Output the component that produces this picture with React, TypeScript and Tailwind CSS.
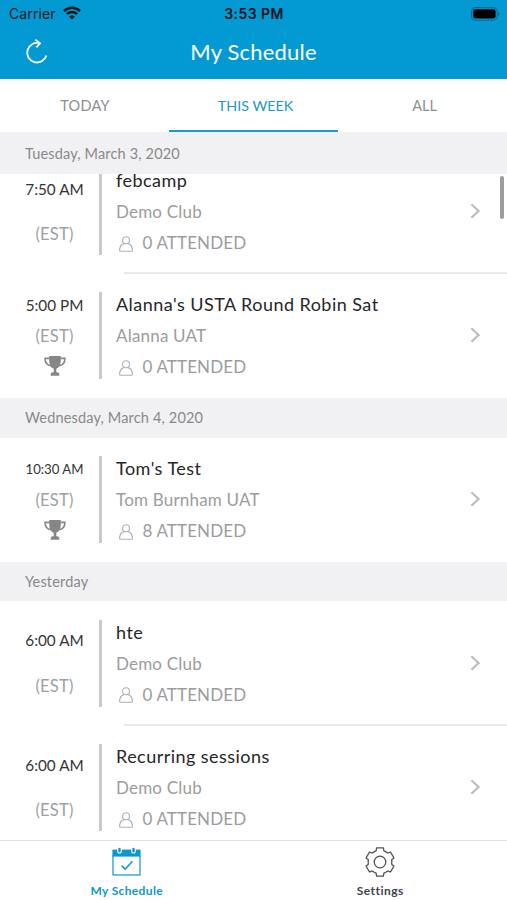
import clsx from "clsx"

type Session = {
  time: string
  title: string
  club: string
  attended: number
  trophy?: boolean
  smallTime?: boolean
}

type Section = {
  label: string
  sessions: Session[]
}

const first: Section = {
  label: "Tuesday, March 3, 2020",
  sessions: [
    { time: "7:50 AM", title: "febcamp", club: "Demo Club", attended: 0 },
    { time: "5:00 PM", title: "Alanna's USTA Round Robin Sat", club: "Alanna UAT", attended: 0, trophy: true },
  ],
}

const rest: Section[] = [
  {
    label: "Wednesday, March 4, 2020",
    sessions: [
      { time: "10:30 AM", title: "Tom's Test", club: "Tom Burnham UAT", attended: 8, trophy: true, smallTime: true },
    ],
  },
  {
    label: "Yesterday",
    sessions: [
      { time: "6:00 AM", title: "hte", club: "Demo Club", attended: 0 },
      { time: "6:00 AM", title: "Recurring sessions", club: "Demo Club", attended: 0 },
    ],
  },
]

function WifiIcon() {
  return (
    <svg width="18" height="14" viewBox="0 0 18 14" fill="none" stroke="#06151c" strokeWidth="2.5">
      <path d="M1 5.1a11.4 11.4 0 0 1 16 0" />
      <path d="M3.9 8.2a7.3 7.3 0 0 1 10.2 0" />
      <path d="M9 13.6 6.2 10.7a4 4 0 0 1 5.6 0Z" fill="#06151c" stroke="none" />
    </svg>
  )
}

function BatteryIcon() {
  return (
    <svg width="30" height="14" viewBox="0 0 30 14">
      <rect x="0.6" y="0.6" width="25.6" height="12.6" rx="4" fill="none" stroke="#05698f" strokeWidth="1.1" />
      <rect x="2.2" y="2.2" width="22.4" height="9.4" rx="2.4" fill="#000" />
      <path d="M27.3 4.8c1.6.7 1.6 3.6 0 4.3Z" fill="#05698f" />
    </svg>
  )
}

function RefreshIcon() {
  return (
    <svg width="24" height="26" viewBox="0 0 24 26" fill="none" stroke="#fff" strokeWidth="1.8">
      <path d="M14.5 4.2A9.8 9.8 0 1 0 21.4 16.5" />
      <path d="M10.4.8 15 4.3 11.4 8.4" />
    </svg>
  )
}

function PersonIcon() {
  return (
    <svg width="14" height="16" viewBox="0 0 14 16" fill="none" stroke="#b0b0b2" strokeWidth="1.1">
      <circle cx="7" cy="4.2" r="3.5" />
      <path d="M4.9 7.6C2.3 8.4.6 10.8.6 14.6Q.6 15.2 1.2 15.2H12.8Q13.4 15.2 13.4 14.6C13.4 10.8 11.7 8.4 9.1 7.6" />
    </svg>
  )
}

function TrophyIcon() {
  return (
    <svg width="22" height="20" viewBox="0 0 22 20">
      <path
        d="M5.2 0H16.8V4.5C16.8 9 15 11.8 12.3 12.8V16.2H13C14.5 16.2 15.3 17 15.3 18.2V19.8H6.7V18.2C6.7 17 7.5 16.2 9 16.2H9.7V12.8C7 11.8 5.2 9 5.2 4.5Z"
        fill="#868688"
      />
      <path
        d="M5.5 2.4H1.1C1.1 6.5 3 9.3 7.3 9.7M16.5 2.4H20.9C20.9 6.5 19 9.3 14.7 9.7"
        fill="none"
        stroke="#868688"
        strokeWidth="1.6"
      />
    </svg>
  )
}

function ChevronIcon() {
  return (
    <svg width="11" height="16" viewBox="0 0 11 16" fill="none" stroke="#bdbdbf" strokeWidth="2.2">
      <path d="M1.4 1.3 8.6 8 1.4 14.7" />
    </svg>
  )
}

function CalendarIcon() {
  return (
    <svg width="29" height="29" viewBox="0 0 29 29">
      <path d="M.4 2.6H28.6V10H.4Z" fill="#0d97d0" />
      <rect x="1" y="9" width="27" height="19" fill="#fff" stroke="#0d97d0" strokeWidth="1.2" />
      <rect x="5.2" y="0" width="4.6" height="6.6" rx="2.2" fill="#fff" />
      <rect x="19.2" y="0" width="4.6" height="6.6" rx="2.2" fill="#fff" />
      <rect x="6.3" y="0.8" width="2.4" height="4.6" rx="1.2" fill="#0d97d0" />
      <rect x="20.3" y="0.8" width="2.4" height="4.6" rx="1.2" fill="#0d97d0" />
      <path d="M9.6 18.6 13.2 22.1 20.5 14.3" fill="none" stroke="#0d97d0" strokeWidth="1.5" />
    </svg>
  )
}

const teeth = [0, 60, 120, 180, 240, 300]

// one sixth of the outline: tooth top, side, then the valley towards the next tooth
const gearPath =
  teeth
    .map((deg, i) => {
      const a = (deg * Math.PI) / 180
      const at = (x: number, y: number) =>
        `${(15 + x * Math.cos(a) - y * Math.sin(a)).toFixed(2)} ${(15 + x * Math.sin(a) + y * Math.cos(a)).toFixed(2)}`
      return `${i === 0 ? "M" : "L"}${at(-3.4, -14.1)}L${at(3.4, -14.1)}L${at(3.9, -11.2)}Q${at(6, -10.4)} ${at(7.75, -8.98)}`
    })
    .join("") + "Z"

function GearIcon() {
  return (
    <svg width="30" height="30" viewBox="0 0 30 30" fill="none" stroke="#505256" strokeWidth="1.3" strokeLinejoin="round">
      <circle cx="15" cy="15" r="5.8" />
      <path d={gearPath} />
    </svg>
  )
}

function SectionHeader({ label, className }: { label: string; className?: string }) {
  return (
    <div className={clsx("flex shrink-0 items-center bg-[#f1f1f3] pl-[25px] text-[14.5px] text-[#88888a]", className)}>
      <span className="tracking-[0.16px]">{label}</span>
    </div>
  )
}

function SessionRow({ session, divider }: { session: Session; divider: boolean }) {
  return (
    <div className="flex h-[124.3px] shrink-0 flex-col">
      <div className="flex flex-1 items-start pt-[18.5px]">
        <div
          className={clsx(
            "flex h-[87px] w-[109px] shrink-0 flex-col items-center whitespace-nowrap leading-[31px]",
            session.trophy ? "-mt-[2.5px]" : "mt-[5.5px]"
          )}
        >
          <span className={clsx("text-[#343436]", session.smallTime ? "text-[13.2px]" : "text-[15.3px]")}>
            {session.time}
          </span>
          <span className={clsx("text-[16.5px] tracking-[0.2px] text-[#a0a0a2]", session.trophy ? "" : "mt-[14.5px]")}>
            (EST)
          </span>
          {session.trophy && (
            <span className="mt-[4.5px]">
              <TrophyIcon />
            </span>
          )}
        </div>
        <div className="-ml-[10px] h-[87px] w-[2.5px] shrink-0 bg-[#cacacc]" />
        <div className="-mt-[3px] ml-[14.5px] flex-1 whitespace-nowrap leading-[31px]">
          <div className="text-[18px] tracking-[0.46px] text-[#262628]">{session.title}</div>
          <div className="text-[17px] tracking-[0.2px] text-[#9c9c9e]">{session.club}</div>
          <div className="flex items-center pl-[2.5px] text-[17px] text-[#9c9c9e]">
            <span className="pt-[2px]">
              <PersonIcon />
            </span>
            <span className="ml-[10px] tracking-[0.12px]">{session.attended} ATTENDED</span>
          </div>
        </div>
        <div className="mt-[35px] mr-[26px]">
          <ChevronIcon />
        </div>
      </div>
      {divider && <div className="ml-[124px] h-[1.5px] bg-[#e9e9eb]" />}
    </div>
  )
}

function SessionList({ sessions }: { sessions: Session[] }) {
  return (
    <>
      {sessions.map((s, i) => (
        <SessionRow key={i} session={s} divider={i < sessions.length - 1} />
      ))}
    </>
  )
}

export default function App() {
  return (
    <div className="flex h-[900px] w-[507px] flex-col overflow-hidden bg-white font-['Lato',sans-serif]">
      <header className="h-[79px] shrink-0 bg-[#039ad3]">
        <div className="grid h-[27px] grid-cols-3 items-center pr-[6px] pl-[9px] font-['Inter',sans-serif] text-[14px] text-[#06151c]">
          <div className="flex items-center gap-[7px]">
            <span className="tracking-[0.1px]">Carrier</span>
            <span className="-mt-[2px]">
              <WifiIcon />
            </span>
          </div>
          <div className="-ml-[2px] text-center font-semibold tracking-[0.45px] whitespace-nowrap">3:53 PM</div>
          <div className="flex justify-end">
            <BatteryIcon />
          </div>
        </div>
        <div className="grid h-[52px] grid-cols-[80px_1fr_80px] items-center">
          <button className="-mt-[2px] pl-[25px]" aria-label="Refresh">
            <RefreshIcon />
          </button>
          <h1 className="-mt-[3px] text-center text-[22px] tracking-[0.2px] text-white">My Schedule</h1>
        </div>
      </header>

      <nav className="grid h-[53px] shrink-0 grid-cols-3 text-[14.5px] text-[#8e8e90]">
        <button className="flex items-center justify-center pl-[1px] tracking-[0.25px]">TODAY</button>
        <button className="flex items-center justify-center border-b-[2.5px] border-[#1b98c8] pt-[2px] pl-[4px] text-[14.3px] text-[#1b98c8]">
          THIS WEEK
        </button>
        <button className="flex items-center justify-center pl-[4px]">ALL</button>
      </nav>

      <SectionHeader label={first.label} className="h-[42px] pt-[2px]" />

      <main className="relative flex min-h-0 flex-1 flex-col overflow-hidden">
        <div className="-mt-[24.5px] flex flex-col">
          <SessionList sessions={first.sessions} />
        </div>
        {rest.map((section) => (
          <div key={section.label} className="flex shrink-0 flex-col">
            <SectionHeader label={section.label} className="h-[39.5px]" />
            <SessionList sessions={section.sessions} />
          </div>
        ))}
        <div className="absolute top-[2px] right-[3px] h-[43px] w-[4px] rounded-full bg-[#9d9d9f]" />
      </main>

      <footer className="grid h-[60.5px] shrink-0 grid-cols-2 border-t-[1.5px] border-[#e2e2e4] bg-white text-[12px] font-bold">
        <button className="flex flex-col items-center pt-[6px] text-[#0d97d0]">
          <CalendarIcon />
          <span className="mt-[6px] tracking-[0.35px]">My Schedule</span>
        </button>
        <button className="flex flex-col items-center pt-[6px] text-[#434347]">
          <GearIcon />
          <span className="mt-[5px] tracking-[0.45px]">Settings</span>
        </button>
      </footer>
    </div>
  )
}
